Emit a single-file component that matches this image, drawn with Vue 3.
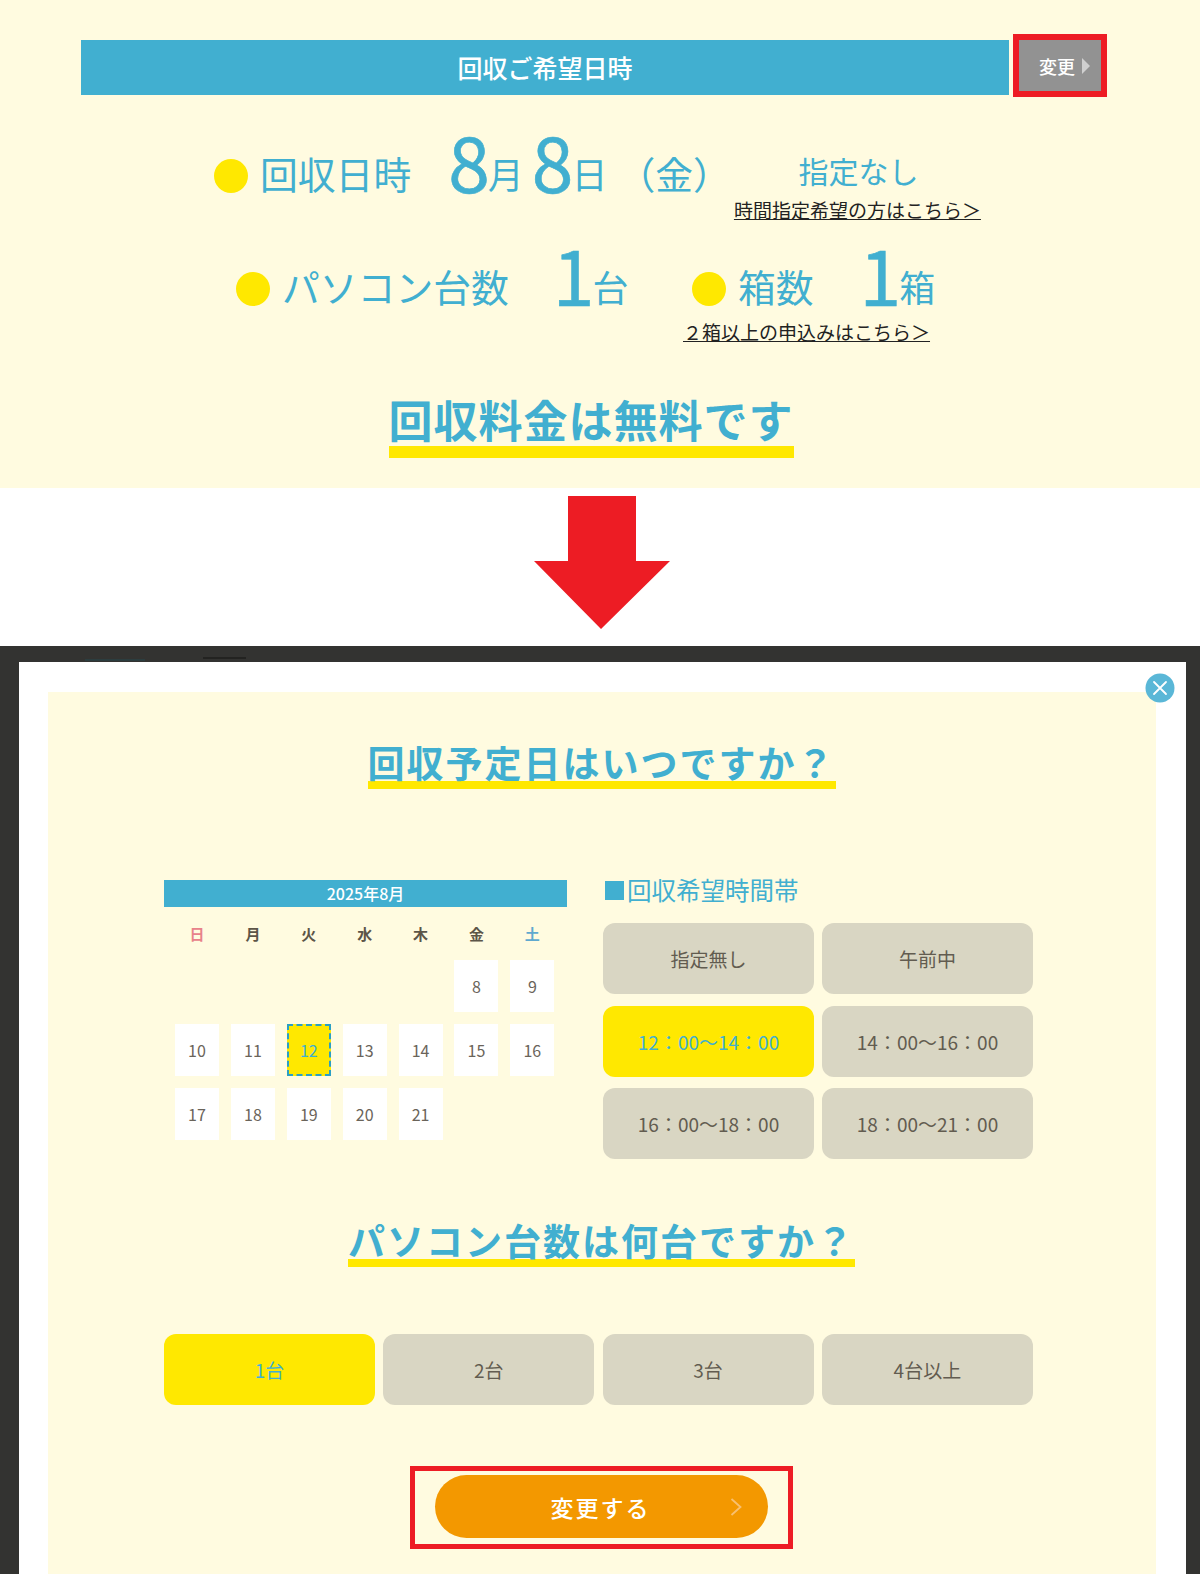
<script setup>
const weekdays = [
  { t: '日', c: 'sun' }, { t: '月', c: '' }, { t: '火', c: '' }, { t: '水', c: '' },
  { t: '木', c: '' }, { t: '金', c: '' }, { t: '土', c: 'sat' }
]
const days = [null, null, null, null, null, 8, 9, 10, 11, 12, 13, 14, 15, 16, 17, 18, 19, 20, 21]
const times = ['指定無し', '午前中', '12：00～14：00', '14：00～16：00', '16：00～18：00', '18：00～21：00']
const counts = ['1台', '2台', '3台', '4台以上']
</script>

<template>
  <div class="page">
    <section class="top">
      <div class="bar-row">
        <div class="bar">回収ご希望日時</div>
        <div class="frame-small">
          <div class="change">
            <span>変更</span>
            <i class="tri"></i>
          </div>
        </div>
      </div>

      <div class="row row1">
        <i class="dot"></i>
        <span class="lbl">回収日時</span>
        <span class="val first"><b>8</b>月</span>
        <span class="val second"><b>8</b>日</span>
        <span class="lbl wd">（金）</span>
        <div class="slot">
          <span class="slot-val">指定なし</span>
          <a class="link">時間指定希望の方はこちら＞</a>
        </div>
      </div>

      <div class="row row2">
        <i class="dot"></i>
        <span class="lbl">パソコン台数</span>
        <span class="val num1"><b>1</b>台</span>
        <i class="dot dot2"></i>
        <span class="lbl">箱数</span>
        <span class="val num2"><b>1</b>箱</span>
      </div>
      <div class="link-row"><a class="link">２箱以上の申込みはこちら＞</a></div>

      <div class="free-wrap"><h2 class="free">回収料金は無料です</h2></div>
    </section>

    <section class="gap">
      <svg class="arrow" width="136" height="133" viewBox="0 0 136 133">
        <polygon points="34,0 102,0 102,65 136,65 67,133 0,65 34,65" fill="#ed1c24" />
      </svg>
    </section>

    <section class="overlay">
      <i class="ghost ghost-a"></i>
      <i class="ghost ghost-b"></i>
      <div class="modal">
        <button class="close" aria-label="閉じる">
          <svg width="30" height="30" viewBox="0 0 30 30">
            <circle cx="15" cy="15" r="14.5" fill="#5ab7d7" />
            <path d="M9 9 L21 21 M21 9 L9 21" stroke="#fff" stroke-width="1.8" stroke-linecap="round" />
          </svg>
        </button>
        <div class="cream">
          <div class="title-wrap t1"><h2 class="title">回収予定日はいつですか？</h2></div>

          <div class="pick">
            <div class="cal">
              <div class="cal-head">2025年8月</div>
              <div class="weekdays">
                <span v-for="w in weekdays" :key="w.t" :class="['wk', w.c]">{{ w.t }}</span>
              </div>
              <div class="days">
                <template v-for="(d, i) in days" :key="i">
                  <span v-if="d" :class="['day', { sel: d === 12 }]">{{ d }}</span>
                  <span v-else class="blank"></span>
                </template>
              </div>
            </div>
            <div class="times">
              <h3 class="times-h"><span class="sq"></span>回収希望時間帯</h3>
              <div class="opt-grid">
                <div v-for="t in times" :key="t" :class="['opt', { on: t.startsWith('12') }]">{{ t }}</div>
              </div>
            </div>
          </div>

          <div class="title-wrap t2"><h2 class="title">パソコン台数は何台ですか？</h2></div>

          <div class="count-grid">
            <div v-for="c in counts" :key="c" :class="['opt', { on: c === '1台' }]">{{ c }}</div>
          </div>

          <div class="submit-wrap">
            <div class="frame-big">
              <button class="submit">
                <span>変更する</span>
                <svg class="chev" width="12" height="18" viewBox="0 0 12 18">
                  <path d="M1.5 1 L10.5 9 L1.5 17" fill="none" stroke="#f8c070" stroke-width="1.8" />
                </svg>
              </button>
            </div>
          </div>
        </div>
      </div>
    </section>
  </div>
</template>

<style>
html, body { margin: 0; background: #fff; }
</style>

<style scoped>
.page {
  width: 1200px;
  height: 1574px;
  overflow: hidden;
  font-family: "Noto Sans CJK JP", "Noto Sans", sans-serif;
  color: #5c5548;
}
.top {
  height: 488px;
  background: #fffbe0;
  padding-top: 34px;
  box-sizing: border-box;
}
.bar-row { display: flex; padding-left: 81px; }
.bar {
  width: 928px;
  height: 55px;
  margin-top: 6px;
  background: #41afd0;
  color: #fff;
  font-size: 25px;
  font-weight: 500;
  line-height: 55px;
  text-align: center;
}
.frame-small {
  margin-left: 4px;
  width: 94px;
  height: 63px;
  box-sizing: border-box;
  border: 6px solid #ed1c24;
  background: #fff;
}
.change {
  height: 100%;
  background: #929292;
  color: #fff;
  font-size: 18px;
  font-weight: 500;
  display: flex;
  align-items: center;
  justify-content: flex-end;
  padding-right: 11px;
  gap: 7px;
}
.tri {
  width: 0;
  height: 0;
  border-left: 8px solid #d0d0d0;
  border-top: 8px solid transparent;
  border-bottom: 8px solid transparent;
}
.row {
  display: flex;
  align-items: baseline;
  color: #41afd0;
  font-size: 37.8px;
  line-height: 60px;
  box-sizing: border-box;
  padding-top: 2px;
}
.row1 { padding-left: 214px; margin-top: 32px; height: 113px; }
.row2 { padding-left: 236px; height: 78px; }
.dot {
  width: 34px;
  height: 34px;
  border-radius: 50%;
  background: #ffe800;
  align-self: flex-start;
  margin: 28px 12px 0 0;
  flex: none;
}
.dot2 { margin-left: 63.5px; }
.lbl, .val { white-space: nowrap; }
.val { font-size: 36px; }
.val b {
  font-size: 75px;
  font-weight: 400;
  line-height: 60px;
  letter-spacing: -2px;
  vertical-align: -4px;
  -webkit-text-stroke: 0.6px #41afd0;
}
.first { margin-left: 37px; }
.second { margin-left: 8px; }
.wd { margin-left: 10px; }
.num1 { margin-left: 44px; }
.num2 { margin-left: 46px; }
.slot {
  margin-left: 3px;
  display: flex;
  flex-direction: column;
  align-items: center;
  align-self: flex-start;
  padding-top: 12px;
}
.slot-val { font-size: 30px; line-height: 55px; padding-left: 2px; }
.link {
  color: #222;
  font-size: 19px;
  font-weight: 400;
  line-height: 24px;
  text-decoration: underline;
  white-space: nowrap;
}
.link-row { padding-left: 683px; height: 24px; }
.free-wrap { text-align: center; margin-top: 48px; padding-right: 18px; }
.free {
  display: inline-block;
  margin: 0;
  font-size: 44px;
  line-height: 54px;
  letter-spacing: 1px;
  font-weight: 700;
  color: #41afd0;
  border-bottom: 12px solid #ffe800;
}
.gap { height: 158px; display: flex; justify-content: center; padding-top: 8px; box-sizing: border-box; }
.arrow { display: block; margin-left: 4px; }
.overlay {
  position: relative;
  height: 928px;
  background: #333331;
  padding: 16px 14px 0 19px;
  box-sizing: border-box;
}
.ghost { position: absolute; top: 11px; height: 2px; }
.ghost-a { left: 85px; width: 60px; background: #2c3d3f; top: 13px; }
.ghost-b { left: 203px; width: 43px; background: #232321; }
.modal {
  position: relative;
  background: #fff;
  height: 100%;
  padding: 30px 30px 0 29px;
  box-sizing: border-box;
}
.close {
  position: absolute;
  right: 11px;
  top: 11px;
  padding: 0;
  border: 0;
  background: none;
  width: 30px;
  height: 30px;
  z-index: 1;
}
.close svg { display: block; }
.cream {
  height: 100%;
  background: #fffbe0;
  padding: 0 117px 0 116px;
  box-sizing: border-box;
}
.title-wrap { text-align: center; }
.t1 { padding-top: 51px; }
.t2 { margin-top: 62px; }
.title {
  display: inline-block;
  margin: 0;
  font-size: 37px;
  line-height: 38px;
  font-weight: 700;
  color: #41afd0;
  letter-spacing: 2px;
  border-bottom: 8px solid #ffe800;
}
.pick {
  display: flex;
  margin-top: 91px;
  gap: 36px;
  align-items: flex-start;
}
.cal { width: 403px; flex: none; }
.cal-head {
  height: 27px;
  background: #41afd0;
  color: #fff;
  font-size: 16px;
  font-weight: 500;
  line-height: 27px;
  text-align: center;
}
.weekdays, .days {
  display: grid;
  grid-template-columns: repeat(7, 44px);
  column-gap: 11.9px;
  padding-left: 11px;
}
.weekdays { height: 53px; align-items: center; }
.wk { text-align: center; font-size: 15px; font-weight: 700; color: #5c5548; }
.sun { color: #e8828a; }
.sat { color: #5fa9cf; }
.days { row-gap: 12px; }
.day, .blank { height: 52px; box-sizing: border-box; }
.day {
  background: #fff;
  font-size: 16px;
  color: #6a645a;
  display: flex;
  align-items: center;
  justify-content: center;
}
.day.sel {
  background: #ffe800;
  color: #41afd0;
  border: 2px dashed #2ba0c4;
}
.times { width: 430px; }
.times-h {
  margin: -6px 0 17px;
  font-size: 24.5px;
  font-weight: 400;
  line-height: 32px;
  color: #41afd0;
  display: flex;
  align-items: center;
  gap: 3px;
  padding-left: 2px;
}
.sq { width: 19px; height: 19px; background: #41afd0; }
.opt-grid {
  display: grid;
  grid-template-columns: 211px 211px;
  grid-auto-rows: 71px;
  column-gap: 8px;
  row-gap: 11.5px;
}
.opt {
  background: #d9d6c3;
  border-radius: 12px;
  font-size: 19px;
  color: #625c50;
  display: flex;
  align-items: center;
  justify-content: center;
}
.opt.on { background: #ffe800; color: #41afd0; }
.count-grid {
  display: grid;
  grid-template-columns: repeat(4, 211px);
  grid-auto-rows: 71px;
  column-gap: 8.3px;
  margin-top: 67px;
}
.submit-wrap { display: flex; justify-content: center; margin-top: 61px; }
.frame-big {
  width: 383px;
  height: 83px;
  box-sizing: border-box;
  border: 5px solid #ed1c24;
  padding: 4px 20px 0 20px;
}
.submit {
  position: relative;
  width: 333px;
  height: 63px;
  border: 0;
  padding: 0 2px 0 0;
  border-radius: 32px;
  background: #f39800;
  color: #fff;
  font-family: inherit;
  font-size: 23px;
  font-weight: 500;
  letter-spacing: 2px;
  display: block;
}
.chev { position: absolute; right: 26px; top: 23px; }
</style>
